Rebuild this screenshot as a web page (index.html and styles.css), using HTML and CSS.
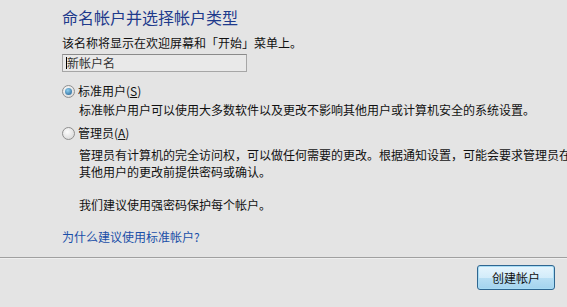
FILE: index.html
```html
<!DOCTYPE html>
<html lang="zh-CN">
  <head>
    <meta charset="UTF-8" />
    <meta name="viewport" content="width=device-width, initial-scale=1.0" />
    <title>创建新帐户</title>
    <link rel="stylesheet" href="styles.css">
  </head>
  <body>
    <div class="content">
      <h1 class="title">命名帐户并选择帐户类型</h1>
      <p class="subtitle">该名称将显示在欢迎屏幕和「开始」菜单上。</p>
      <div class="name-box"><span class="caret"></span>新帐户名</div>

      <div class="option first">
        <span class="radio checked"></span>
        <span class="option-label">标准用户(<u>S</u>)</span>
      </div>
      <p class="desc desc-std">标准帐户用户可以使用大多数软件以及更改不影响其他用户或计算机安全的系统设置。</p>

      <div class="option second">
        <span class="radio"></span>
        <span class="option-label">管理员(<u>A</u>)</span>
      </div>
      <p class="desc desc-admin">管理员有计算机的完全访问权，可以做任何需要的更改。根据通知设置，可能会要求管理员在<br>其他用户的更改前提供密码或确认。</p>

      <p class="desc note">我们建议使用强密码保护每个帐户。</p>

      <a href="#" class="help-link">为什么建议使用标准帐户?</a>
    </div>

    <div class="footer">
      <button class="create-btn">创建帐户</button>
    </div>
  </body>
</html>
```
FILE: styles.css
```css
body {
  font-family: "Noto Sans CJK SC", "Liberation Sans", sans-serif;
  background-color: #e4e4e4;
  margin: 0;
  color: #111;
  font-size: 12px;
  overflow: hidden;
  width: 567px;
  height: 307px;
}
.content {
  padding: 7px 0 0 62px;
  height: 257px;
  box-sizing: border-box;
  white-space: nowrap;
  overflow: hidden;
}
.title {
  margin: 0;
  font-size: 16px;
  font-weight: normal;
  line-height: 20px;
  color: #1e3a8c;
}
.subtitle {
  margin: 8px 0 0;
  line-height: 16px;
}
.name-box {
  margin-top: 3px;
  width: 185px;
  height: 18px;
  box-sizing: border-box;
  border: 1px solid #a6a6a6;
  border-top-color: #8a8a8a;
  background: #e9e9e9;
  color: #333;
  line-height: 16px;
  padding-left: 3px;
  display: flex;
  align-items: center;
}
.caret {
  width: 1px;
  height: 12px;
  background: #000;
}
.option {
  display: flex;
  align-items: center;
  line-height: 16px;
}
.option.first {
  margin-top: 11px;
}
.option.second {
  margin-top: 7px;
}
.radio {
  width: 11px;
  height: 11px;
  border: 1px solid #8f8f8f;
  border-radius: 50%;
  background: radial-gradient(circle at 40% 35%, #fdfdfd, #d2d2d2);
  margin-right: 3px;
  position: relative;
}
.radio.checked::after {
  content: "";
  position: absolute;
  left: 2px;
  top: 2px;
  width: 7px;
  height: 7px;
  border-radius: 50%;
  background: radial-gradient(circle at 40% 35%, #8fd0f0, #1d5a8e);
}
.option-label u {
  text-underline-offset: 1px;
}
.desc {
  margin: 3px 0 0 17px;
  line-height: 16px;
}
.desc-admin {
  margin-top: 5px;
  line-height: 17px;
}
.note {
  margin-top: 17px;
}
.help-link {
  display: block;
  margin-top: 16px;
  line-height: 16px;
  color: #1a4fa8;
  text-decoration: none;
}
.footer {
  border-top: 1px solid #a0a0a0;
  box-shadow: inset 0 1px 0 #efefef;
  display: flex;
  justify-content: flex-end;
  padding: 7px 12px 0 0;
}
.create-btn {
  width: 78px;
  height: 25px;
  border: 1px solid #2f6690;
  border-radius: 3px;
  background: linear-gradient(#e6f5fd 0%, #d3ecfa 50%, #b9dff4 51%, #a3d3ee 100%);
  box-shadow: inset 0 0 0 1px #a8dcf5;
  font-family: "Noto Sans CJK SC", sans-serif;
  font-size: 12px;
  color: #111;
  padding: 0;
}
```
